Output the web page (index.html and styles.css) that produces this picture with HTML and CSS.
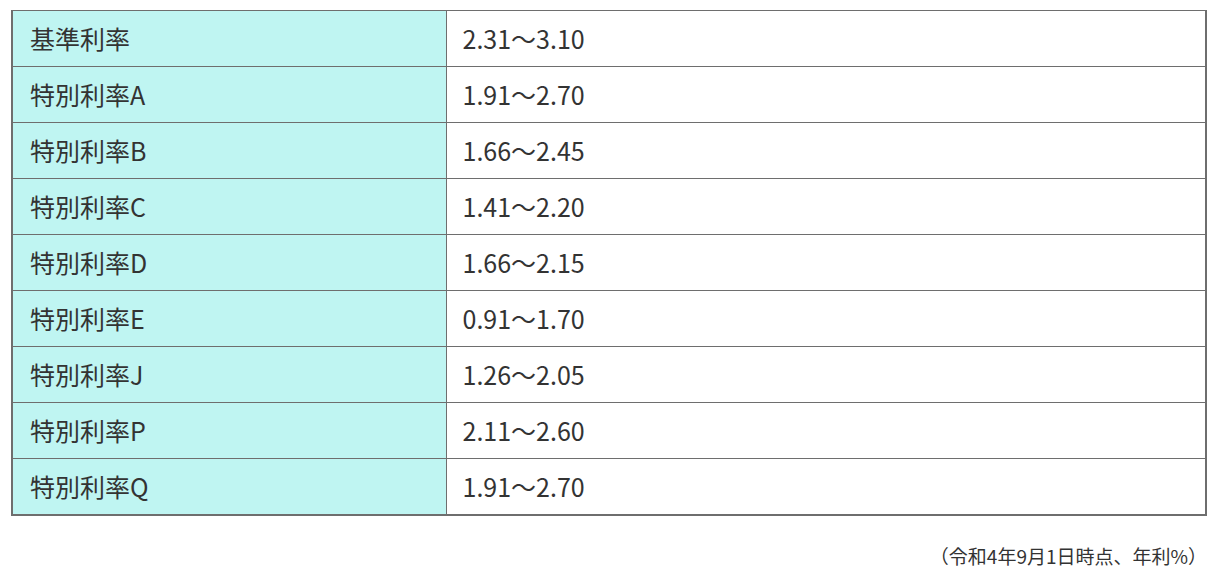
FILE: index.html
```html
<!DOCTYPE html>
<html lang="ja">
<head>
<meta charset="utf-8">
<link rel="stylesheet" href="styles.css">
</head>
<body>
<div class="wrap">
  <table class="rates">
    <tbody>
      <tr><th>基準利率</th><td>2.31〜3.10</td></tr>
      <tr><th>特別利率A</th><td>1.91〜2.70</td></tr>
      <tr><th>特別利率B</th><td>1.66〜2.45</td></tr>
      <tr><th>特別利率C</th><td>1.41〜2.20</td></tr>
      <tr><th>特別利率D</th><td>1.66〜2.15</td></tr>
      <tr><th>特別利率E</th><td>0.91〜1.70</td></tr>
      <tr><th>特別利率J</th><td>1.26〜2.05</td></tr>
      <tr><th>特別利率P</th><td>2.11〜2.60</td></tr>
      <tr><th>特別利率Q</th><td>1.91〜2.70</td></tr>
    </tbody>
  </table>
  <p class="note">（令和4年9月1日時点、年利%）</p>
</div>
</body>
</html>
```
FILE: styles.css
```css
html, body {
  margin: 0;
  padding: 0;
  background: #fff;
}
body {
  font-family: "Noto Sans CJK JP", "Noto Sans", sans-serif;
  color: #333;
}
.wrap {
  padding: 10px 21px 0 11px;
}
.rates {
  width: 1196px;
  border-collapse: collapse;
  border-top: 1px solid #6e6e6e;
  border-left: 2px solid #6e6e6e;
  border-right: 2px solid #6e6e6e;
  border-bottom: 2px solid #6e6e6e;
}
.rates th,
.rates td {
  height: 56px;
  padding: 0 0 0 17px;
  border-top: 1px solid #6e6e6e;
  border-bottom: 1px solid #6e6e6e;
  font-size: 25px;
  font-weight: 400;
  text-align: left;
  vertical-align: middle;
  line-height: 1;
  box-sizing: border-box;
}
.rates th {
  width: 434px;
  background: #bff5f2;
  border-right: 1px solid #6e6e6e;
}
.rates td {
  background: #fff;
  padding-left: 16px;
}
.note {
  margin: 26px 0 0;
  text-align: right;
  font-size: 19px;
  color: #333;
  line-height: 1.5;
}
```
